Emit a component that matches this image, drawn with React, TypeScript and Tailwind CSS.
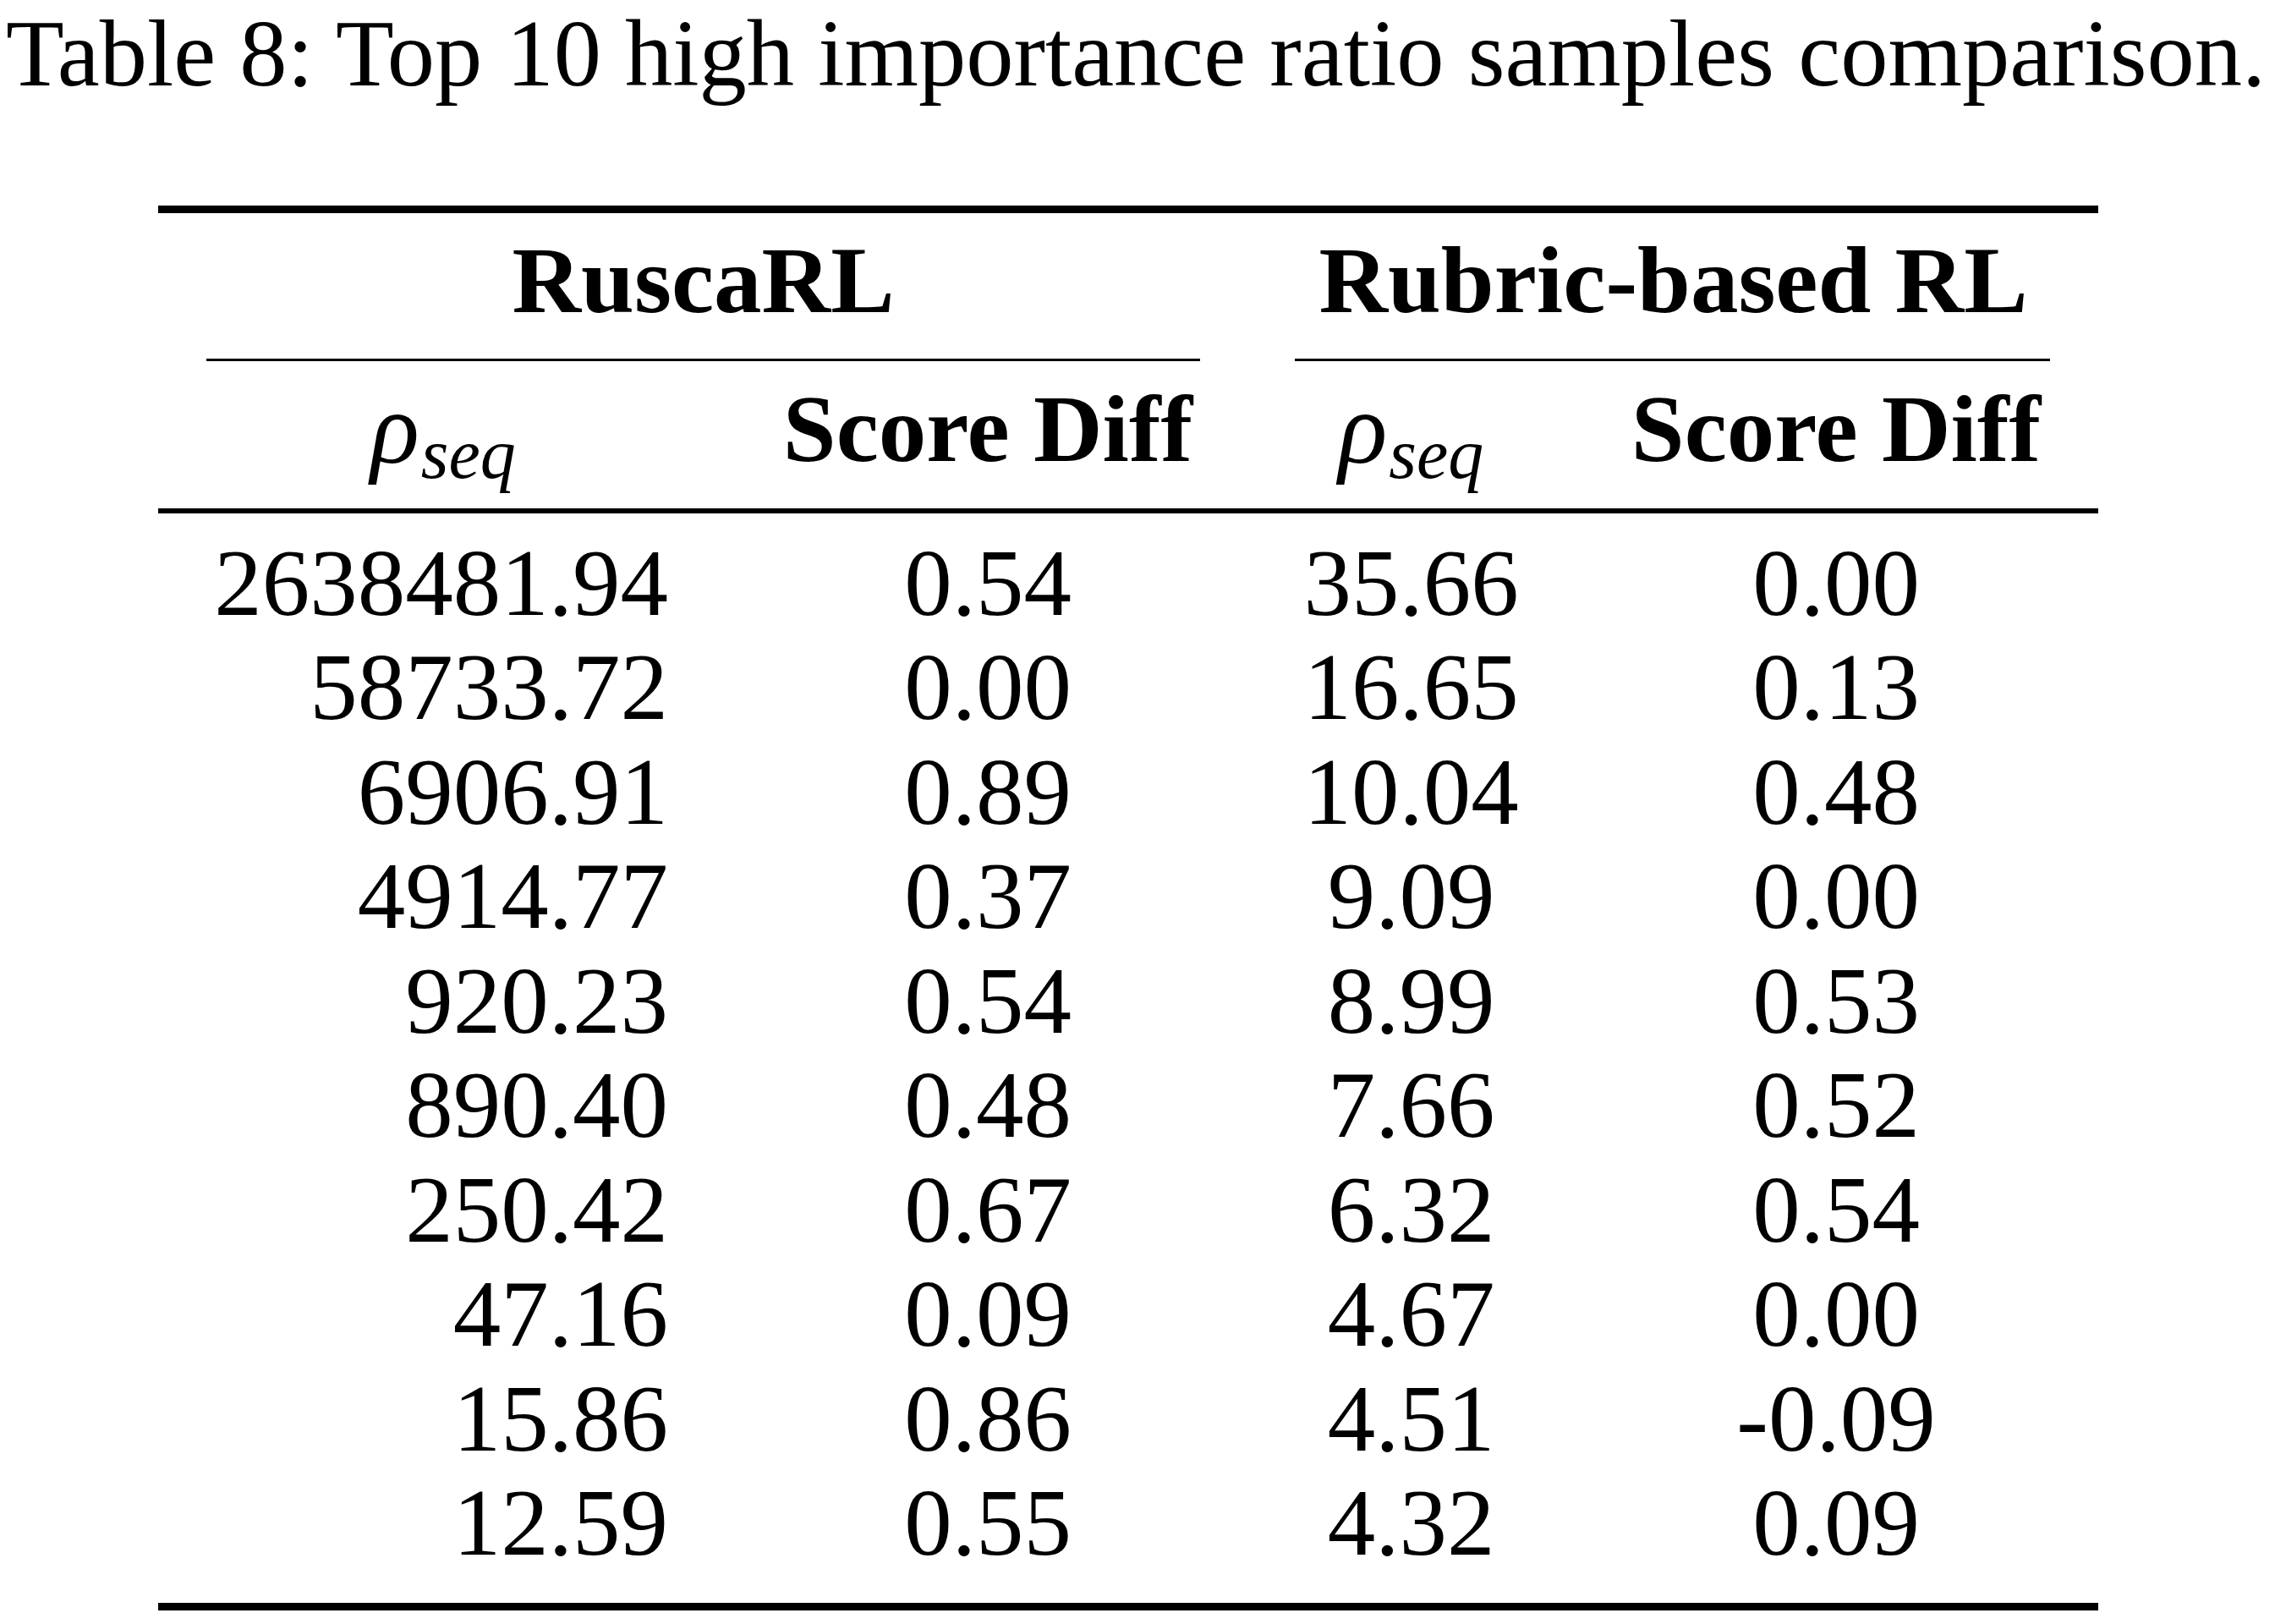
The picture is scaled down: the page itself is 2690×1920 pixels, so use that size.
import React from "react";

const rows: [string, string, string, string][] = [
  ["2638481.94", "0.54", "35.66", "0.00"],
  ["58733.72", "0.00", "16.65", "0.13"],
  ["6906.91", "0.89", "10.04", "0.48"],
  ["4914.77", "0.37", "9.09", "0.00"],
  ["920.23", "0.54", "8.99", "0.53"],
  ["890.40", "0.48", "7.66", "0.52"],
  ["250.42", "0.67", "6.32", "0.54"],
  ["47.16", "0.09", "4.67", "0.00"],
  ["15.86", "0.86", "4.51", "-0.09"],
  ["12.59", "0.55", "4.32", "0.09"],
];

const grid = "grid grid-cols-[673px_616px_385px_620px]";

function Rho() {
  return (
    <span className="italic">
      <span className="text-[120px]">ρ</span>
      <span className="text-[84px] align-[-18px] ml-[2px]">seq</span>
    </span>
  );
}

export default function App() {
  return (
    <div
      className="w-[2690px] h-[1920px] bg-white text-black overflow-hidden"
      style={{ fontFamily: '"Liberation Serif", "Times New Roman", serif' }}
    >
      <div className="h-[126px] leading-[126px] text-[112.5px] pl-[7px] whitespace-nowrap">
        Table 8: Top 10 high importance ratio samples comparison.
      </div>

      <div className="ml-[187px] w-[2294px] mt-[117px] text-[113px]">
        <div className="h-[9px] bg-black" />

        {/* group header */}
        <div className="grid grid-cols-[1289px_1005px] h-[175px] font-bold">
          <div className="flex flex-col">
            <div className="pt-[23px] h-[172px] leading-[112px] text-center">RuscaRL</div>
            <div className="mx-[57px] h-[3px] bg-black" />
          </div>
          <div className="flex flex-col">
            <div className="pt-[23px] h-[172px] leading-[112px] text-center">Rubric-based RL</div>
            <div className="ml-[55px] mr-[57px] h-[3px] bg-black" />
          </div>
        </div>

        {/* sub header */}
        <div className={`${grid} h-[174px] pt-[24px] leading-[112px]`}>
          <div className="pl-[71px] pr-[70px] text-center">
            <Rho />
          </div>
          <div className="text-center font-bold">Score Diff</div>
          <div className="text-center">
            <Rho />
          </div>
          <div className="text-center font-bold">Score Diff</div>
        </div>

        <div className="h-[6px] bg-black" />

        <div className="pt-[19.5px] pb-[33.5px]">
          {rows.map((r, i) => (
            <div key={i} className={`${grid} h-[123.5px] leading-[123.5px]`}>
              <div className="pr-[70px] text-right">{r[0]}</div>
              <div className="text-center">{r[1]}</div>
              <div className="text-center">{r[2]}</div>
              <div className="text-center">{r[3]}</div>
            </div>
          ))}
        </div>

        <div className="h-[9px] bg-black" />
      </div>
    </div>
  );
}
